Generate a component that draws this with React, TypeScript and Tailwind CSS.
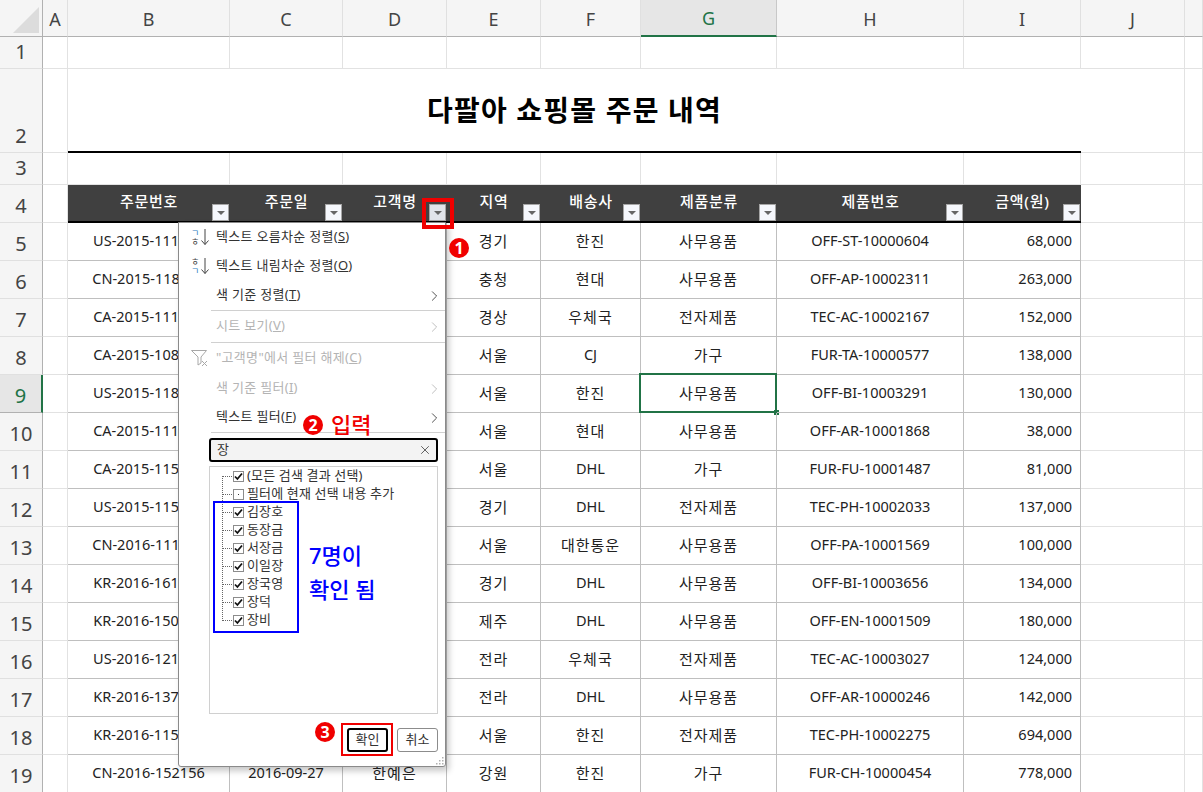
import { X, ChevronRight } from "lucide-react";

const font = "font-['Noto_Sans','Noto_Sans_CJK_KR',sans-serif]";

const columns = ["A", "B", "C", "D", "E", "F", "G", "H", "I", "J", ""];
const headers = ["주문번호", "주문일", "고객명", "지역", "배송사", "제품분류", "제품번호", "금액(원)"];

const rows = [
  ["US-2015-111234", "", "", "경기", "한진", "사무용품", "OFF-ST-10000604", "68,000"],
  ["CN-2015-118234", "", "", "충청", "현대", "사무용품", "OFF-AP-10002311", "263,000"],
  ["CA-2015-111234", "", "", "경상", "우체국", "전자제품", "TEC-AC-10002167", "152,000"],
  ["CA-2015-108234", "", "", "서울", "CJ", "가구", "FUR-TA-10000577", "138,000"],
  ["US-2015-118234", "", "", "서울", "한진", "사무용품", "OFF-BI-10003291", "130,000"],
  ["CA-2015-111234", "", "", "서울", "현대", "사무용품", "OFF-AR-10001868", "38,000"],
  ["CA-2015-115234", "", "", "서울", "DHL", "가구", "FUR-FU-10001487", "81,000"],
  ["US-2015-115234", "", "", "경기", "DHL", "전자제품", "TEC-PH-10002033", "137,000"],
  ["CN-2016-111234", "", "", "서울", "대한통운", "사무용품", "OFF-PA-10001569", "100,000"],
  ["KR-2016-161234", "", "", "경기", "DHL", "사무용품", "OFF-BI-10003656", "134,000"],
  ["KR-2016-150234", "", "", "제주", "DHL", "사무용품", "OFF-EN-10001509", "180,000"],
  ["US-2016-121234", "", "", "전라", "우체국", "전자제품", "TEC-AC-10003027", "124,000"],
  ["KR-2016-137234", "", "", "전라", "DHL", "사무용품", "OFF-AR-10000246", "142,000"],
  ["KR-2016-115234", "", "", "서울", "한진", "전자제품", "TEC-PH-10002275", "694,000"],
  ["CN-2016-152156", "2016-09-27", "한예은", "강원", "한진", "가구", "FUR-CH-10000454", "778,000"],
];

const names = ["김장호", "동장금", "서장금", "이일장", "장국영", "장덕", "장비"];

const isHangul = (s: string) => /[가-힣]/.test(s);

const RowHead = ({ n, active }: { n: number; active?: boolean }) => (
  <div
    className={`flex items-end justify-center pb-[6px] text-[20px] leading-none border-b border-r ${
      active ? "bg-[#e6e6e6] text-[#217346] border-r-2 border-r-[#217346] border-b-[#b1b1b1]" : "bg-[#f5f5f5] text-[#444] border-b-[#e0e0e0] border-r-[#b1b1b1]"
    }`}
  >
    {n}
  </div>
);

const Blank = ({ cls = "" }: { cls?: string }) => <div className={`border-b border-r border-[#e2e2e2] ${cls}`} />;

const FilterBtn = ({ active }: { active?: boolean }) => (
  <div
    className={`absolute right-[1px] bottom-0 flex h-[17px] w-[17px] items-center justify-center border border-[#a6a6a6] ${
      active ? "bg-[#e1e4ea]" : "bg-[#f5f7fc]"
    }`}
  >
    <div className="mt-[1px] h-0 w-0 border-x-[4px] border-t-[4px] border-x-transparent border-t-[#666]" />
  </div>
);

const Bullet = ({ n, cls }: { n: number; cls: string }) => (
  <div className={`absolute flex h-[20px] w-[20px] items-center justify-center rounded-full bg-[#f00000] text-[16px] leading-none font-bold text-white ${cls}`}>
    {n}
  </div>
);

const SortIcon = ({ top, bottom, topColor, bottomColor }: { top: string; bottom: string; topColor: string; bottomColor: string }) => (
  <div className="absolute left-[12px] top-[5px] flex h-[18px] w-[18px]">
    <div className="flex w-[10px] flex-col text-[9px] leading-[9px]">
      <span className={topColor}>{top}</span>
      <span className={bottomColor}>{bottom}</span>
    </div>
    <svg width="8" height="18" viewBox="0 0 8 18">
      <path d="M4 1V16.5M0.5 12.5L4 16.5L7.5 12.5" fill="none" stroke="#444" strokeWidth="1" />
    </svg>
  </div>
);

const MenuItem = ({
  label,
  hotkey,
  disabled,
  arrow,
  h = "h-[29px]",
  children,
}: {
  label: string;
  hotkey: string;
  disabled?: boolean;
  arrow?: boolean;
  h?: string;
  children?: React.ReactNode;
}) => (
  <div className={`relative flex shrink-0 items-center pb-[2px] pl-[37px] text-[13px] tracking-[0.3px] ${h} ${disabled ? "text-[#b4b4b4]" : "text-[#333]"}`}>
    {children}
    <span>
      {label}(<u>{hotkey}</u>)
    </span>
    {arrow && (
      <ChevronRight
        size={17}
        strokeWidth={1.2}
        className={`absolute right-[2px] top-1/2 -translate-y-1/2 ${disabled ? "text-[#b4b4b4]" : "text-[#333]"}`}
      />
    )}
  </div>
);

const Separator = () => <div className="ml-[32px] h-px shrink-0 bg-[#d0d0d0]" />;

const CheckBox = ({ mixed }: { mixed?: boolean }) => (
  <div className="flex h-[11px] w-[11px] shrink-0 items-center justify-center border border-[#8c8c8c] bg-white">
    {mixed ? (
      <div className="h-px w-px bg-[#333]" />
    ) : (
      <svg width="9" height="9" viewBox="0 0 9 9">
        <path d="M1 4.5L3.4 7L8 1.5" fill="none" stroke="#111" strokeWidth="1.8" />
      </svg>
    )}
  </div>
);

const ListRow = ({ label, mixed }: { label: string; mixed?: boolean }) => (
  <div className="flex h-[18px] items-center">
    <div className="mr-[1px] w-[9px] border-t border-dotted border-[#666]" />
    <CheckBox mixed={mixed} />
    <span className="ml-[3px] whitespace-nowrap text-[13px] tracking-[0.15px] text-[#333]">{label}</span>
  </div>
);

export default function App() {
  return (
    <div className={`relative h-[792px] w-[1203px] overflow-hidden bg-white ${font}`}>
      <div className="grid grid-cols-[43px_25px_162px_113px_104px_94px_100px_136px_187px_117px_104px_18px] grid-rows-[37px_32px_84px_32px_38px_repeat(15,38px)]">
        {/* column headers */}
        <div className="flex items-end justify-end border-b border-r border-[#b1b1b1] bg-[#f5f5f5] pb-[3px] pr-[3px]">
          <svg width="26" height="26" viewBox="0 0 26 26">
            <polygon points="26,0 26,26 0,26" fill="#dcdcdc" />
          </svg>
        </div>
        {columns.map((c, i) => (
          <div
            key={i}
            className={`flex items-center justify-center pt-[2px] text-[18px] border-r ${
              c === "G"
                ? "bg-[#e6e6e6] text-[#217346] border-b-2 border-b-[#217346] border-r-[#c8c8c8]"
                : "bg-[#f5f5f5] text-[#444] border-b border-b-[#b1b1b1] border-r-[#e0e0e0]"
            }`}
          >
            {c}
          </div>
        ))}

        {/* row 1 */}
        <RowHead n={1} />
        {columns.map((_, i) => (
          <Blank key={i} />
        ))}

        {/* row 2 */}
        <RowHead n={2} />
        <Blank />
        <div className="col-span-8 flex items-center justify-center border-b-2 border-black text-[28px] font-bold tracking-[1.2px] text-black">
          다팔아 쇼핑몰 주문 내역
        </div>
        <Blank />
        <Blank />

        {/* row 3 */}
        <RowHead n={3} />
        {columns.map((_, i) => (
          <Blank key={i} />
        ))}

        {/* row 4 */}
        <RowHead n={4} />
        <Blank />
        {headers.map((h, i) => (
          <div key={h} className="relative flex items-center justify-center border-b-2 border-black bg-[#404040] pb-[3px] text-[15px] font-medium tracking-[0.7px] text-white">
            {h}
            <FilterBtn active={i === 2} />
          </div>
        ))}
        <Blank />
        <Blank />

        {/* data rows */}
        {rows.map((row, r) => (
          <div key={r} className="contents">
            <RowHead n={r + 5} active={r + 5 === 9} />
            <Blank />
            {row.map((v, i) => (
              <div
                key={i}
                className={`relative flex items-center whitespace-nowrap border-b border-r border-[#bfbfbf] pb-[1px] text-[#222] ${
                  isHangul(v) ? "text-[15px] tracking-[1px]" : "text-[14.5px]"
                } ${i === 7 ? "justify-end pr-[8px]" : "justify-center"}`}
              >
                {v}
                {r === 4 && i === 5 && (
                  <div className="absolute -left-[2px] -top-[2px] -right-px -bottom-px border-2 border-[#217346]">
                    <div className="absolute -bottom-[4px] -right-[4px] h-[5px] w-[5px] bg-[#217346]" />
                  </div>
                )}
              </div>
            ))}
            <Blank />
            <Blank />
          </div>
        ))}
      </div>

      {/* filter menu */}
      <div className="absolute left-[178px] top-[222px] flex h-[545px] w-[268px] flex-col rounded-b-[3px] border border-[#8a8a8a] bg-white shadow-[3px_4px_6px_rgba(0,0,0,0.22)]">
        <MenuItem label="텍스트 오름차순 정렬" hotkey="S">
          <SortIcon top="ㄱ" bottom="ㅎ" topColor="text-[#2b7cc0]" bottomColor="text-[#444]" />
        </MenuItem>
        <MenuItem label="텍스트 내림차순 정렬" hotkey="O">
          <SortIcon top="ㅎ" bottom="ㄱ" topColor="text-[#444]" bottomColor="text-[#2b7cc0]" />
        </MenuItem>
        <MenuItem label="색 기준 정렬" hotkey="T" arrow />
        <Separator />
        <MenuItem label="시트 보기" hotkey="V" arrow disabled h="h-[31px]" />
        <Separator />
        <MenuItem label={'"고객명"에서 필터 해제'} hotkey="C" disabled h="h-[31px]">
          <svg width="18" height="17" viewBox="0 0 18 17" className="absolute left-[12px] top-[7px]">
            <path d="M0.5 0.5H15.5L10 7V13L7 15V7Z" fill="none" stroke="#a8a8a8" />
            <path d="M11 11L16 16M16 11L11 16" fill="none" stroke="#a8a8a8" />
          </svg>
        </MenuItem>
        <MenuItem label="색 기준 필터" hotkey="I" arrow disabled />
        <MenuItem label="텍스트 필터" hotkey="F" arrow />
        <Separator />

        <div className="ml-[30px] mr-[7px] mt-[5px] flex h-[24px] shrink-0 items-center justify-between rounded-[3px] border-2 border-black bg-[#f3f3f3] pl-[6px] pr-[4px] text-[13px] text-[#333]">
          장
          <X size={14} strokeWidth={1.3} className="text-[#333]" />
        </div>

        <div className="relative ml-[30px] mr-[7px] mt-[4px] h-[248px] shrink-0 border border-[#d0d0d0] pl-[13px]">
          <div className="absolute left-[12px] top-[9px] h-[145px] border-l border-dotted border-[#666]" />
          <ListRow label="(모든 검색 결과 선택)" />
          <ListRow label="필터에 현재 선택 내용 추가" mixed />
          {names.map((n) => (
            <ListRow key={n} label={n} />
          ))}
        </div>

        <div className="mr-[7px] mt-[14px] flex justify-end gap-[9px] text-[13px] text-[#333]">
          <div className="flex h-[24px] w-[41px] items-center justify-center rounded-[3px] border-2 border-black">확인</div>
          <div className="flex h-[24px] w-[41px] items-center justify-center rounded-[3px] border border-[#8c8c8c]">취소</div>
        </div>

        <svg width="8" height="8" viewBox="0 0 8 8" className="absolute bottom-[1px] right-[1px]">
          <path d="M6 0h1.5v1.5H6zM3 3h1.5v1.5H3zM6 3h1.5v1.5H6zM0 6h1.5v1.5H0zM3 6h1.5v1.5H3zM6 6h1.5v1.5H6z" fill="#b0b0b0" />
        </svg>
      </div>

      {/* annotations */}
      <div className="absolute left-[422px] top-[198px] h-[31px] w-[32px] border-[4px] border-[#f00000]" />
      <Bullet n={1} cls="left-[449px] top-[238px]" />
      <Bullet n={2} cls="left-[303px] top-[415px]" />
      <div className="absolute left-[331px] top-[409px] text-[22px] font-medium leading-[30px] text-[#f00000]">입력</div>
      <div className="absolute left-[213px] top-[501px] h-[132px] w-[86px] border-2 border-[#0000ff]" />
      <div className="absolute left-[309px] top-[540px] text-[22px] font-medium leading-[30px] text-[#0000ff]">7명이</div>
      <div className="absolute left-[309px] top-[574px] text-[22px] font-medium leading-[30px] text-[#0000ff]">확인 됨</div>
      <Bullet n={3} cls="left-[315px] top-[722px]" />
      <div className="absolute left-[341px] top-[723px] h-[33px] w-[52px] border-2 border-[#f00000]" />
    </div>
  );
}
